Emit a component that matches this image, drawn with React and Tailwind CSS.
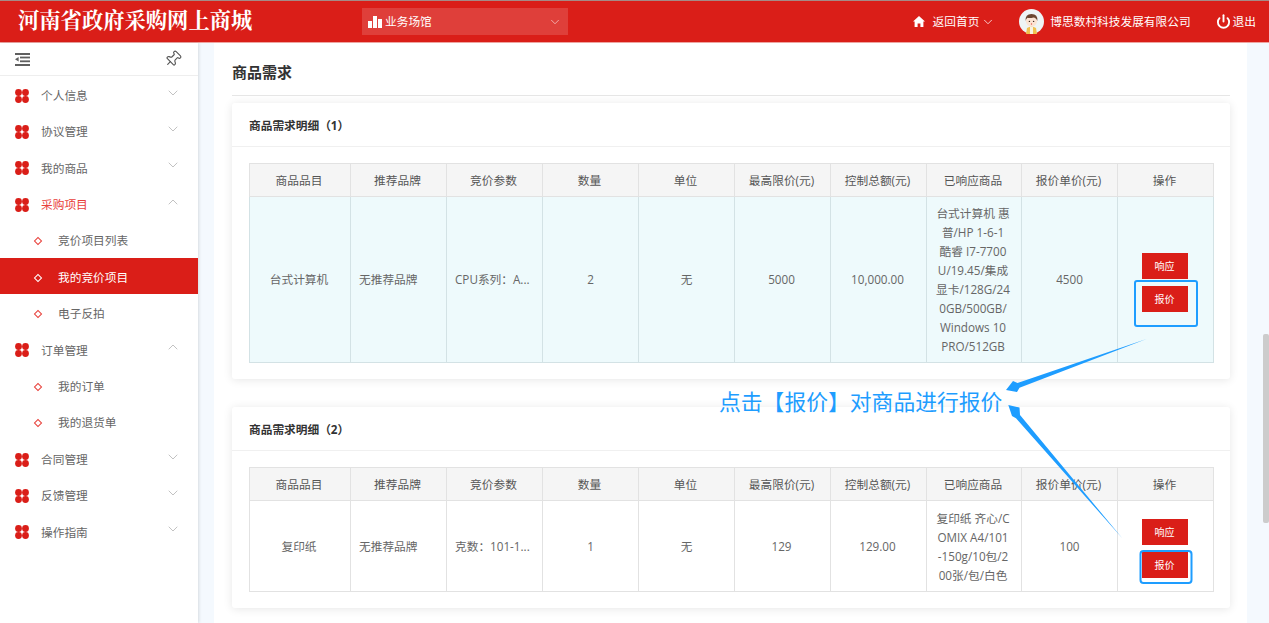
import { ChevronDown, ChevronUp, Pin, Power } from "lucide-react";

const font = "font-['Open_Sans','Noto_Sans_CJK_SC',sans-serif]";

const menu = [
  { name: "个人信息" },
  { name: "协议管理" },
  { name: "我的商品" },
  { name: "采购项目", open: true, red: true, subs: [{ name: "竞价项目列表" }, { name: "我的竞价项目", active: true }, { name: "电子反拍" }] },
  { name: "订单管理", open: true, subs: [{ name: "我的订单" }, { name: "我的退货单" }] },
  { name: "合同管理" },
  { name: "反馈管理" },
  { name: "操作指南" },
];

const columns = ["商品品目", "推荐品牌", "竞价参数", "数量", "单位", "最高限价(元)", "控制总额(元)", "已响应商品", "报价单价(元)", "操作"];

const cards = [
  {
    title: "商品需求明细（1）",
    rowClass: "h-[166px] bg-[#eefafc]",
    borderClass: "border-[#d3e2e5]",
    name: "台式计算机",
    param: "CPU系列：A...",
    count: "2",
    limit: "5000",
    total: "10,000.00",
    goods: ["台式计算机 惠", "普/HP 1-6-1", "酷睿 I7-7700", "U/19.45/集成", "显卡/128G/24", "0GB/500GB/", "Windows 10", "PRO/512GB"],
    price: "4500",
  },
  {
    title: "商品需求明细（2）",
    rowClass: "h-[91px] bg-white",
    borderClass: "border-[#e2e2e2]",
    name: "复印纸",
    param: "克数：101-1...",
    count: "1",
    limit: "129",
    total: "129.00",
    goods: ["复印纸 齐心/C", "OMIX A4/101", "-150g/10包/2", "00张/包/白色"],
    price: "100",
  },
];

function Clover() {
  return (
    <svg width="14" height="14" viewBox="0 0 14 14" className="shrink-0">
      <circle cx="3.5" cy="3.5" r="3.4" fill="#da1e18" />
      <circle cx="10.5" cy="3.5" r="3.4" fill="#da1e18" />
      <circle cx="3.5" cy="10.5" r="3.4" fill="#da1e18" />
      <circle cx="10.5" cy="10.5" r="3.4" fill="#da1e18" />
    </svg>
  );
}

function Avatar() {
  return (
    <svg width="25" height="25" viewBox="0 0 25 25" className="shrink-0">
      <circle cx="12.5" cy="12.5" r="12.5" fill="#eef4f5" />
      <path d="M7 25 L8 19 Q12.5 16 17 19 L18 25 Z" fill="#f0c14f" />
      <rect x="11" y="18" width="3" height="7" fill="#f7f2e2" />
      <circle cx="12.5" cy="12" r="5.6" fill="#fbe3d3" />
      <path d="M6.6 12 Q6 5 12.5 5 Q19 5 18.4 12 Q17 8.6 14.5 8.4 Q11 9.6 8.4 8.8 Q7 10 6.6 12 Z" fill="#6b4630" />
      <circle cx="10.4" cy="12.4" r="0.7" fill="#3a2a20" />
      <circle cx="14.6" cy="12.4" r="0.7" fill="#3a2a20" />
      <circle cx="12.5" cy="15" r="0.7" fill="#e2574c" />
    </svg>
  );
}

function Header() {
  return (
    <header className="h-[43px] shrink-0 flex items-center bg-[#da1e18] border-t border-t-[#a58a86] border-b border-b-[#eea5a1] text-white">
      <div className="w-[362px] shrink-0 pl-[18px] text-[21.3px] leading-none font-bold font-['Liberation_Serif','Noto_Serif_CJK_SC',serif] whitespace-nowrap">
        河南省政府采购网上商城
      </div>
      <div className="w-[206px] h-[27px] flex items-center pl-[6px] pr-[6px] bg-white/15 text-[11.7px]">
        <svg width="15" height="13" viewBox="0 0 15 13" className="mr-[2px]">
          <rect x="0" y="6" width="4" height="7" fill="#fff" />
          <rect x="5" y="1" width="4" height="12" fill="#fff" />
          <rect x="10" y="4" width="4" height="9" fill="#fff" />
        </svg>
        <span className="flex-1">业务场馆</span>
        <ChevronDown size={14} strokeWidth={1.2} className="opacity-80" />
      </div>
      <div className="ml-auto flex items-center text-[11.7px] pr-[13px]">
        <svg width="12" height="11" viewBox="0 0 12 11">
          <path d="M6 0 L12 5.4 L10.4 5.4 L10.4 11 L7.4 11 L7.4 7.4 L4.6 7.4 L4.6 11 L1.6 11 L1.6 5.4 L0 5.4 Z" fill="#fff" />
        </svg>
        <span className="ml-[8px]">返回首页</span>
        <ChevronDown size={14} strokeWidth={1.3} className="ml-[2px]" />
        <div className="ml-[24px]">
          <Avatar />
        </div>
        <span className="ml-[6px]">博思数村科技发展有限公司</span>
        <Power size={15} strokeWidth={3} className="ml-[25px]" />
        <span className="ml-[2px]">退出</span>
      </div>
    </header>
  );
}

function Sidebar() {
  return (
    <aside className="w-[198px] shrink-0 bg-white shadow-[1px_0_3px_rgba(0,0,0,0.12)] z-10 text-[11.7px] text-[#666]">
      <div className="h-[33px] flex items-center justify-between pl-[15px] pr-[16px] border-b border-[#eeeeee]">
        <svg width="15" height="13" viewBox="0 0 15 13">
          <rect x="0" y="0" width="15" height="2" fill="#5f5f5f" />
          <rect x="5" y="3.6" width="10" height="1.8" fill="#5f5f5f" />
          <rect x="5" y="7.4" width="10" height="1.8" fill="#5f5f5f" />
          <rect x="0" y="11" width="15" height="2" fill="#5f5f5f" />
          <path d="M0 6.3 L3.6 4 L3.6 8.6 Z" fill="#5f5f5f" />
        </svg>
        <Pin size={18} strokeWidth={1.5} className="rotate-45 text-[#555]" />
      </div>
      {menu.map((item) => (
        <div key={item.name}>
          <div className="h-[36.4px] flex items-center pt-[3px] pl-[15px] pr-[17px]">
            <Clover />
            <span className={`ml-[12px] flex-1 ${item.red ? "text-[#e8403a]" : ""}`}>{item.name}</span>
            {item.open ? (
              <ChevronUp size={16} strokeWidth={0.9} className="text-[#999] -mt-[6px]" />
            ) : (
              <ChevronDown size={16} strokeWidth={0.9} className="text-[#999] -mt-[6px]" />
            )}
          </div>
          {item.subs?.map((sub) => (
            <div
              key={sub.name}
              className={`h-[36.4px] flex items-center pt-[3px] pl-[35px] ${sub.active ? "bg-[#da1e18] text-white" : ""}`}
            >
              <span className={`w-[6px] h-[6px] rotate-45 border ${sub.active ? "border-white" : "border-[#e8403a]"}`} />
              <span className="ml-[17px]">{sub.name}</span>
            </div>
          ))}
        </div>
      ))}
    </aside>
  );
}

function RedButton({ children }) {
  return (
    <button className="w-[46px] h-[26px] bg-[#da1e18] text-white text-[10px] leading-none">{children}</button>
  );
}

function DemandCard({ card }) {
  const cell = `border ${card.borderClass} text-center align-middle`;
  return (
    <section className="bg-white rounded-[3px] shadow-[0_1px_10px_rgba(0,0,0,0.1)]">
      <div className="h-[44px] flex items-center pt-[3px] px-[17px] border-b border-[#f0f0f0] text-[11.7px] font-bold text-[#333]">
        {card.title}
      </div>
      <div className="px-[17px] pt-[16px] pb-[16px]">
        <table className="w-[964px] table-fixed border-collapse text-[11.7px] text-[#666]">
          <colgroup>
            <col className="w-[101px]" />
            <col className="w-[96px]" />
            <col className="w-[96px]" />
            <col className="w-[96px]" />
            <col className="w-[96px]" />
            <col className="w-[96px]" />
            <col className="w-[96px]" />
            <col className="w-[95px]" />
            <col className="w-[96px]" />
            <col className="w-[96px]" />
          </colgroup>
          <thead>
            <tr className="h-[33px] bg-[#f5f5f5]">
              {columns.map((col) => (
                <th key={col} className="border border-[#e2e2e2] pt-[2px] pr-[2px] font-normal text-[#555]">
                  {col}
                </th>
              ))}
            </tr>
          </thead>
          <tbody>
            <tr className={card.rowClass}>
              <td className={`${cell} pt-[1px] pr-[2px]`}>{card.name}</td>
              <td className={`${cell} !text-left pt-[1px] pl-[8px]`}>无推荐品牌</td>
              <td className={`${cell} !text-left pt-[1px] pl-[8px] whitespace-nowrap`}>{card.param}</td>
              <td className={`${cell} pt-[1px]`}>{card.count}</td>
              <td className={`${cell} pt-[1px]`}>无</td>
              <td className={`${cell} pt-[1px] pr-[2px]`}>{card.limit}</td>
              <td className={`${cell} pt-[1px] pr-[2px]`}>{card.total}</td>
              <td className={`${cell} pt-[1px] pr-[2px] leading-[19px] whitespace-nowrap`}>
                {card.goods.map((line) => (
                  <div key={line}>{line}</div>
                ))}
              </td>
              <td className={`${cell} pt-[1px]`}>{card.price}</td>
              <td className={cell}>
                <div className="flex flex-col items-center gap-[7px] pt-[5px] pr-[2px]">
                  <RedButton>响应</RedButton>
                  <RedButton>报价</RedButton>
                </div>
              </td>
            </tr>
          </tbody>
        </table>
      </div>
    </section>
  );
}

// 标注层：蓝色高亮框、箭头和说明文字
function Annotation() {
  return (
    <>
      <svg width="1269" height="623" viewBox="0 0 1269 623" className="absolute left-0 top-0 z-20 pointer-events-none">
        <rect x="1135" y="281" width="62" height="45" rx="2" fill="none" stroke="#1e9dff" strokeWidth="2" />
        <rect x="1140.5" y="551" width="51" height="32" rx="3" fill="none" stroke="#1e9dff" strokeWidth="2" />
        <path d="M1146.5 339 L1019.5 387.8 L1017 392 L1006 390 L1013 381 L1017.5 383 Z" fill="#1e9dff" />
        <path d="M1122.3 538.3 L1020 415 L1019.5 407.5 L1008.3 405 L1012 416 L1016 418.2 Z" fill="#1e9dff" />
      </svg>
      <div className="absolute left-[719px] top-[387px] z-20 text-[21.8px] leading-[30px] text-[#1e9dff] whitespace-nowrap">
        点击【报价】对商品进行报价
      </div>
    </>
  );
}

export default function App() {
  return (
    <div className={`relative h-[623px] overflow-hidden flex flex-col bg-white ${font}`}>
      <Header />
      <div className="flex flex-1 min-h-0">
        <Sidebar />
        <main className="relative flex-1 min-w-0 bg-[#f4f9fe] pl-[16px] pr-[22px]">
          <div className="h-full bg-white pl-[18px] pr-[17px]">
            <h2 className="h-[53px] pt-[19px] text-[15px] leading-[20px] font-bold text-[#333] border-b border-[#e6e6e6]">
              商品需求
            </h2>
            <div className="mt-[7px] flex flex-col gap-[28px]">
              {cards.map((card) => (
                <DemandCard key={card.title} card={card} />
              ))}
            </div>
          </div>
          <div className="absolute right-0 top-[291px] w-[6px] h-[189px] rounded-[2px] bg-[#cccccc]" />
        </main>
      </div>
      <Annotation />
    </div>
  );
}
